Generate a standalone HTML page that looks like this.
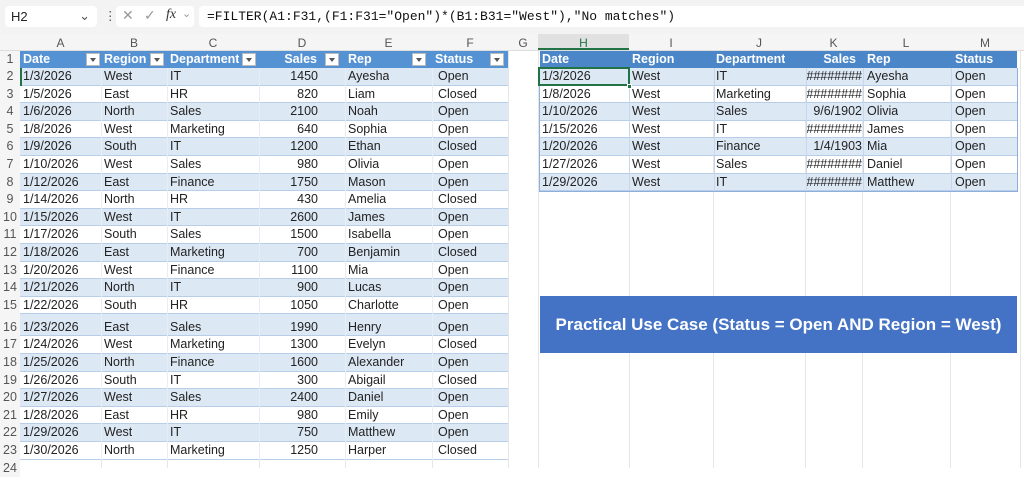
<!DOCTYPE html>
<html><head><meta charset="utf-8"><style>
*{margin:0;padding:0;box-sizing:border-box}
body{width:1024px;height:468px;overflow:hidden;background:#fff;font-family:"Liberation Sans",sans-serif;font-size:12.5px;color:#222;position:relative}
.tb{position:absolute;left:0;top:0;width:1024px;height:34px;background:#f3f3f3}
.nb{position:absolute;left:5px;top:6px;width:92px;height:21px;background:#fff;border-radius:4px;padding:3px 6px;font-size:13px}
.fxb{position:absolute;left:116px;top:6px;width:78px;height:21px;background:#fff;border-radius:4px;color:#999;font-size:14px}
.fb{position:absolute;left:199px;top:6px;width:825px;height:21px;background:#fff;border-radius:4px 0 0 4px;padding:3px 8px;font-family:"Liberation Mono",monospace;font-size:13px;color:#111}
.ch{position:absolute;top:34px;left:0;width:1024px;height:17px;background:#f5f5f5;border-bottom:1px solid #ddd;color:#555;font-size:12px}
.ch span{position:absolute;top:2px;text-align:center}
.r{position:absolute;left:0;height:17.6px;line-height:17.6px;white-space:nowrap}
.r span{position:absolute;top:0;overflow:hidden}
.rn{width:20px;text-align:center;color:#555;background:#f5f5f5;height:100%}
.lb{position:absolute;left:20px;width:488px;height:100%;border-bottom:1px solid #b7cde8}
.rb{position:absolute;left:540px;width:477px;height:100%;border-bottom:1px solid #b7cde8}
.bl{background:#dde8f5}
.hd{background:#5592d4;color:#fff;font-weight:bold}
.hdr{background:#4a86c8;color:#fff;font-weight:bold}
.dd{position:absolute;width:14px;height:13px;top:2px;background:#fff;border:1px solid #bbb}
.dd:after{content:"";position:absolute;left:3px;top:4px;border:3px solid transparent;border-top:4px solid #555}
.vl{position:absolute;top:0;width:1px;height:100%;background:#c7d7ec}
.gl{position:absolute;top:51px;width:1px;height:417px;background:#e6e6e6}
.ban{position:absolute;left:540px;top:296px;width:477px;height:57px;background:#4472c4;color:#fff;font-weight:bold;font-size:17px;text-align:center;line-height:57px}
</style></head><body>
<i class="gl" style="left:101px"></i><i class="gl" style="left:167px"></i><i class="gl" style="left:259px"></i><i class="gl" style="left:345px"></i><i class="gl" style="left:432px"></i><i class="gl" style="left:508px"></i><i class="gl" style="left:538px"></i><i class="gl" style="left:629px"></i><i class="gl" style="left:713px"></i><i class="gl" style="left:805px"></i><i class="gl" style="left:862px"></i><i class="gl" style="left:950px"></i><i class="gl" style="left:1020px"></i>
<div class="tb">
<div class="nb">H2<span style="position:absolute;right:7px;top:2px;color:#555">⌄</span></div>
<span style="position:absolute;left:104px;top:8px;color:#555">⋮</span>
<div class="fxb"><span style="position:absolute;left:6px;top:1px">✕</span><span style="position:absolute;left:28px;top:1px">✓</span><span style="position:absolute;left:50px;top:1px;font-family:'Liberation Serif',serif;font-style:italic;color:#333">fx</span><span style="position:absolute;left:66px;top:1px;font-size:11px">⌄</span></div>
<div class="fb">=FILTER(A1:F31,(F1:F31="Open")*(B1:B31="West"),"No matches")</div>
</div>
<div class="ch">
<span style="left:20px;width:81px">A</span><span style="left:101px;width:66px">B</span><span style="left:167px;width:92px">C</span><span style="left:259px;width:86px">D</span><span style="left:345px;width:87px">E</span><span style="left:432px;width:76px">F</span><span style="left:508px;width:30px">G</span><span style="left:538px;width:91px;background:#e1e1e1;border-bottom:2px solid #217346;height:16px;top:0;padding-top:2px;color:#217346">H</span><span style="left:629px;width:84px">I</span><span style="left:713px;width:92px">J</span><span style="left:805px;width:57px">K</span><span style="left:862px;width:88px">L</span><span style="left:950px;width:70px">M</span>
</div>
<div style="position:absolute;left:0;top:51px;width:20px;height:417px;background:#f5f5f5"></div>

<div class="r" style="top:51px;width:1024px"><span class="rn">1</span>
<div class="lb hd"><span style="left:3px">Date</span><i class="dd" style="left:66px"></i><span style="left:84px">Region</span><i class="dd" style="left:130px"></i><span style="left:150px">Department</span><i class="dd" style="left:222px"></i><span style="left:240px;width:57px;text-align:right">Sales</span><i class="dd" style="left:305px"></i><span style="left:328px">Rep</span><i class="dd" style="left:392px"></i><span style="left:415px">Status</span><i class="dd" style="left:470px"></i></div>
<div class="rb hdr"><span style="left:2px">Date</span><span style="left:92px">Region</span><span style="left:176px">Department</span><span style="left:265px;width:57px;text-align:right;padding-right:6px">Sales</span><span style="left:327px">Rep</span><span style="left:415px">Status</span></div>
</div>

<div style="position:absolute;top:68px;left:0">
<div class="r" style="top:0"><span class="rn">2</span><div class="lb bl"><span style="left:3px">1/3/2026</span><span style="left:84px">West</span><span style="left:150px">IT</span><span style="left:240px;width:58px;text-align:right">1450</span><span style="left:328px">Ayesha</span><span style="left:418px">Open</span></div></div>
<div class="r" style="top:17.6px"><span class="rn">3</span><div class="lb"><span style="left:3px">1/5/2026</span><span style="left:84px">East</span><span style="left:150px">HR</span><span style="left:240px;width:58px;text-align:right">820</span><span style="left:328px">Liam</span><span style="left:418px">Closed</span></div></div>
<div class="r" style="top:35.2px"><span class="rn">4</span><div class="lb bl"><span style="left:3px">1/6/2026</span><span style="left:84px">North</span><span style="left:150px">Sales</span><span style="left:240px;width:58px;text-align:right">2100</span><span style="left:328px">Noah</span><span style="left:418px">Open</span></div></div>
<div class="r" style="top:52.8px"><span class="rn">5</span><div class="lb"><span style="left:3px">1/8/2026</span><span style="left:84px">West</span><span style="left:150px">Marketing</span><span style="left:240px;width:58px;text-align:right">640</span><span style="left:328px">Sophia</span><span style="left:418px">Open</span></div></div>
<div class="r" style="top:70.4px"><span class="rn">6</span><div class="lb bl"><span style="left:3px">1/9/2026</span><span style="left:84px">South</span><span style="left:150px">IT</span><span style="left:240px;width:58px;text-align:right">1200</span><span style="left:328px">Ethan</span><span style="left:418px">Closed</span></div></div>
<div class="r" style="top:88px"><span class="rn">7</span><div class="lb"><span style="left:3px">1/10/2026</span><span style="left:84px">West</span><span style="left:150px">Sales</span><span style="left:240px;width:58px;text-align:right">980</span><span style="left:328px">Olivia</span><span style="left:418px">Open</span></div></div>
<div class="r" style="top:105.6px"><span class="rn">8</span><div class="lb bl"><span style="left:3px">1/12/2026</span><span style="left:84px">East</span><span style="left:150px">Finance</span><span style="left:240px;width:58px;text-align:right">1750</span><span style="left:328px">Mason</span><span style="left:418px">Open</span></div></div>
<div class="r" style="top:123.2px"><span class="rn">9</span><div class="lb"><span style="left:3px">1/14/2026</span><span style="left:84px">North</span><span style="left:150px">HR</span><span style="left:240px;width:58px;text-align:right">430</span><span style="left:328px">Amelia</span><span style="left:418px">Closed</span></div></div>
<div class="r" style="top:140.8px"><span class="rn">10</span><div class="lb bl"><span style="left:3px">1/15/2026</span><span style="left:84px">West</span><span style="left:150px">IT</span><span style="left:240px;width:58px;text-align:right">2600</span><span style="left:328px">James</span><span style="left:418px">Open</span></div></div>
<div class="r" style="top:158.4px"><span class="rn">11</span><div class="lb"><span style="left:3px">1/17/2026</span><span style="left:84px">South</span><span style="left:150px">Sales</span><span style="left:240px;width:58px;text-align:right">1500</span><span style="left:328px">Isabella</span><span style="left:418px">Open</span></div></div>
<div class="r" style="top:176px"><span class="rn">12</span><div class="lb bl"><span style="left:3px">1/18/2026</span><span style="left:84px">East</span><span style="left:150px">Marketing</span><span style="left:240px;width:58px;text-align:right">700</span><span style="left:328px">Benjamin</span><span style="left:418px">Closed</span></div></div>
<div class="r" style="top:193.6px"><span class="rn">13</span><div class="lb"><span style="left:3px">1/20/2026</span><span style="left:84px">West</span><span style="left:150px">Finance</span><span style="left:240px;width:58px;text-align:right">1100</span><span style="left:328px">Mia</span><span style="left:418px">Open</span></div></div>
<div class="r" style="top:211.2px"><span class="rn">14</span><div class="lb bl"><span style="left:3px">1/21/2026</span><span style="left:84px">North</span><span style="left:150px">IT</span><span style="left:240px;width:58px;text-align:right">900</span><span style="left:328px">Lucas</span><span style="left:418px">Open</span></div></div>
<div class="r" style="top:228.8px"><span class="rn">15</span><div class="lb"><span style="left:3px">1/22/2026</span><span style="left:84px">South</span><span style="left:150px">HR</span><span style="left:240px;width:58px;text-align:right">1050</span><span style="left:328px">Charlotte</span><span style="left:418px">Open</span></div></div>
<div class="r" style="top:246.4px;height:22px;line-height:27px"><span class="rn">16</span><div class="lb bl"><span style="left:3px">1/23/2026</span><span style="left:84px">East</span><span style="left:150px">Sales</span><span style="left:240px;width:58px;text-align:right">1990</span><span style="left:328px">Henry</span><span style="left:418px">Open</span></div></div>
<div class="r" style="top:268.4px"><span class="rn">17</span><div class="lb"><span style="left:3px">1/24/2026</span><span style="left:84px">West</span><span style="left:150px">Marketing</span><span style="left:240px;width:58px;text-align:right">1300</span><span style="left:328px">Evelyn</span><span style="left:418px">Closed</span></div></div>
<div class="r" style="top:286px"><span class="rn">18</span><div class="lb bl"><span style="left:3px">1/25/2026</span><span style="left:84px">North</span><span style="left:150px">Finance</span><span style="left:240px;width:58px;text-align:right">1600</span><span style="left:328px">Alexander</span><span style="left:418px">Open</span></div></div>
<div class="r" style="top:303.6px"><span class="rn">19</span><div class="lb"><span style="left:3px">1/26/2026</span><span style="left:84px">South</span><span style="left:150px">IT</span><span style="left:240px;width:58px;text-align:right">300</span><span style="left:328px">Abigail</span><span style="left:418px">Closed</span></div></div>
<div class="r" style="top:321.2px"><span class="rn">20</span><div class="lb bl"><span style="left:3px">1/27/2026</span><span style="left:84px">West</span><span style="left:150px">Sales</span><span style="left:240px;width:58px;text-align:right">2400</span><span style="left:328px">Daniel</span><span style="left:418px">Open</span></div></div>
<div class="r" style="top:338.8px"><span class="rn">21</span><div class="lb"><span style="left:3px">1/28/2026</span><span style="left:84px">East</span><span style="left:150px">HR</span><span style="left:240px;width:58px;text-align:right">980</span><span style="left:328px">Emily</span><span style="left:418px">Open</span></div></div>
<div class="r" style="top:356.4px"><span class="rn">22</span><div class="lb bl"><span style="left:3px">1/29/2026</span><span style="left:84px">West</span><span style="left:150px">IT</span><span style="left:240px;width:58px;text-align:right">750</span><span style="left:328px">Matthew</span><span style="left:418px">Open</span></div></div>
<div class="r" style="top:374px"><span class="rn">23</span><div class="lb"><span style="left:3px">1/30/2026</span><span style="left:84px">North</span><span style="left:150px">Marketing</span><span style="left:240px;width:58px;text-align:right">1250</span><span style="left:328px">Harper</span><span style="left:418px">Closed</span></div></div>
<div class="r" style="top:391.6px"><span class="rn">24</span></div>
</div>
<div style="position:absolute;left:101px;top:68px;width:1px;height:392px;background:#e8eef6"></div>
<div style="position:absolute;left:167px;top:68px;width:1px;height:392px;background:#e8eef6"></div>
<div style="position:absolute;left:259px;top:68px;width:1px;height:392px;background:#e8eef6"></div>
<div style="position:absolute;left:345px;top:68px;width:1px;height:392px;background:#e8eef6"></div>
<div style="position:absolute;left:432px;top:68px;width:1px;height:392px;background:#e8eef6"></div>

<div style="position:absolute;top:68px;left:0">
<div class="r" style="top:0"><div class="rb bl"><span style="left:2px">1/3/2026</span><span style="left:92px">West</span><span style="left:176px">IT</span><span style="left:262px;width:60px;text-align:right">########</span><span style="left:327px">Ayesha</span><span style="left:415px">Open</span></div></div>
<div class="r" style="top:17.6px"><div class="rb"><span style="left:2px">1/8/2026</span><span style="left:92px">West</span><span style="left:176px">Marketing</span><span style="left:262px;width:60px;text-align:right">########</span><span style="left:327px">Sophia</span><span style="left:415px">Open</span></div></div>
<div class="r" style="top:35.2px"><div class="rb bl"><span style="left:2px">1/10/2026</span><span style="left:92px">West</span><span style="left:176px">Sales</span><span style="left:262px;width:60px;text-align:right">9/6/1902</span><span style="left:327px">Olivia</span><span style="left:415px">Open</span></div></div>
<div class="r" style="top:52.8px"><div class="rb"><span style="left:2px">1/15/2026</span><span style="left:92px">West</span><span style="left:176px">IT</span><span style="left:262px;width:60px;text-align:right">########</span><span style="left:327px">James</span><span style="left:415px">Open</span></div></div>
<div class="r" style="top:70.4px"><div class="rb bl"><span style="left:2px">1/20/2026</span><span style="left:92px">West</span><span style="left:176px">Finance</span><span style="left:262px;width:60px;text-align:right">1/4/1903</span><span style="left:327px">Mia</span><span style="left:415px">Open</span></div></div>
<div class="r" style="top:88px"><div class="rb"><span style="left:2px">1/27/2026</span><span style="left:92px">West</span><span style="left:176px">Sales</span><span style="left:262px;width:60px;text-align:right">########</span><span style="left:327px">Daniel</span><span style="left:415px">Open</span></div></div>
<div class="r" style="top:105.6px"><div class="rb bl"><span style="left:2px">1/29/2026</span><span style="left:92px">West</span><span style="left:176px">IT</span><span style="left:262px;width:60px;text-align:right">########</span><span style="left:327px">Matthew</span><span style="left:415px">Open</span></div></div>
</div>
<div style="position:absolute;left:539px;top:68px;width:479px;height:124px;border:1px solid #8eaedb;border-top:none">
<i class="vl" style="left:89px"></i><i class="vl" style="left:174px"></i><i class="vl" style="left:266px"></i><i class="vl" style="left:323px"></i><i class="vl" style="left:411px"></i>
</div>
<div style="position:absolute;left:538px;top:67px;width:92px;height:19px;border:2px solid #217346"></div>
<div style="position:absolute;left:627px;top:84px;width:5px;height:5px;background:#217346;border:1px solid #fff"></div>
<div style="position:absolute;left:20px;top:68px;width:2px;height:18px;background:#217346"></div>

<div class="ban">Practical Use Case (Status = Open AND Region = West)</div>
</body></html>
